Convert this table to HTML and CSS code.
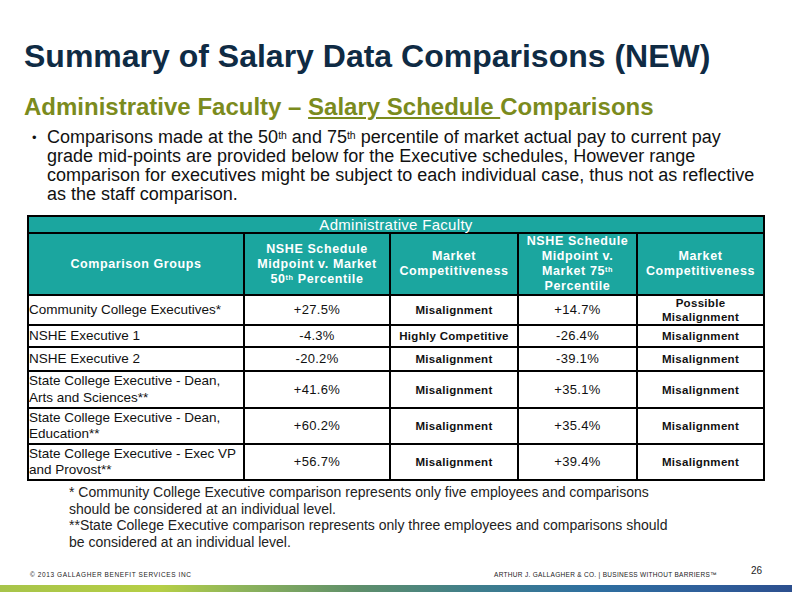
FILE: index.html
```html
<!DOCTYPE html>
<html>
<head>
<meta charset="utf-8">
<link rel="stylesheet" href="styles.css">
</head>
<body>
<div class="slide">
  <h1 class="title">Summary of Salary Data Comparisons (NEW)</h1>
  <h2 class="subtitle">Administrative Faculty – <span class="ul">Salary Schedule </span>Comparisons</h2>
  <ul class="bullets">
    <li>Comparisons made at the 50<sup>th</sup> and 75<sup>th</sup> percentile of market actual pay to current pay grade mid-points are provided below for the Executive schedules, However range comparison for executives might be subject to each individual case, thus not as reflective as the staff comparison.</li>
  </ul>
  <table class="data">
    <colgroup>
      <col class="c1"><col class="c2"><col class="c3"><col class="c4"><col class="c5">
    </colgroup>
    <tr class="r-cap"><th colspan="5" class="cap">Administrative Faculty</th></tr>
    <tr class="r-head">
      <th>Comparison Groups</th>
      <th>NSHE Schedule<br>Midpoint v. Market<br>50<sup>th</sup> Percentile</th>
      <th>Market<br>Competitiveness</th>
      <th>NSHE Schedule<br>Midpoint v.<br>Market 75<sup>th</sup><br>Percentile</th>
      <th>Market<br>Competitiveness</th>
    </tr>
    <tr class="r1">
      <td class="grp">Community College Executives*</td><td>+27.5%</td><td class="mis">Misalignment</td><td>+14.7%</td><td class="pos">Possible<br>Misalignment</td>
    </tr>
    <tr class="r2">
      <td class="grp">NSHE Executive 1</td><td>-4.3%</td><td class="hc">Highly Competitive</td><td>-26.4%</td><td class="mis">Misalignment</td>
    </tr>
    <tr class="r3">
      <td class="grp">NSHE Executive 2</td><td>-20.2%</td><td class="mis">Misalignment</td><td>-39.1%</td><td class="mis">Misalignment</td>
    </tr>
    <tr class="r4">
      <td class="grp">State College Executive - Dean,<br>Arts and Sciences**</td><td>+41.6%</td><td class="mis">Misalignment</td><td>+35.1%</td><td class="mis">Misalignment</td>
    </tr>
    <tr class="r5">
      <td class="grp">State College Executive - Dean,<br>Education**</td><td>+60.2%</td><td class="mis">Misalignment</td><td>+35.4%</td><td class="mis">Misalignment</td>
    </tr>
    <tr class="r6">
      <td class="grp">State College Executive - Exec VP<br>and Provost**</td><td>+56.7%</td><td class="mis">Misalignment</td><td>+39.4%</td><td class="mis">Misalignment</td>
    </tr>
  </table>
  <div class="notes">
    <p>* Community College Executive comparison represents only five employees and comparisons should be considered at an individual level.</p>
    <p>**State College Executive comparison represents only three employees and comparisons should be considered at an individual level.</p>
  </div>
  <div class="bottom">
    <div class="footer">
      <span class="copy">© 2013 GALLAGHER BENEFIT SERVICES INC</span>
      <span class="brand">ARTHUR J. GALLAGHER &amp; CO. | BUSINESS WITHOUT BARRIERS™</span>
      <span class="page">26</span>
    </div>
    <div class="band"></div>
  </div>
</div>
</body>
</html>
```

FILE: styles.css
```css
html, body {
  margin: 0;
  padding: 0;
  background: #ffffff;
}
.slide {
  width: 792px;
  height: 612px;
  overflow: hidden;
  font-family: "Liberation Sans", Arial, sans-serif;
  display: flex;
  flex-direction: column;
}
.title {
  margin: 37px 0 0 24px;
  font-size: 32px;
  line-height: 38px;
  font-weight: bold;
  color: #0f2b44;
  letter-spacing: 0;
  white-space: nowrap;
}
.subtitle {
  margin: 18px 0 0 24px;
  font-size: 24px;
  line-height: 28px;
  font-weight: bold;
  color: #7b8b1d;
  letter-spacing: 0;
  white-space: nowrap;
}
.ul {
  text-decoration: underline;
  text-decoration-thickness: 2px;
  text-underline-offset: 2px;
}
.bullets {
  margin: 7px 0 0 0;
  padding: 0 0 0 47px;
  list-style: none;
}
.bullets li {
  position: relative;
  font-size: 18px;
  line-height: 19px;
  color: #111;
  width: 712px;
}
.bullets li::before {
  content: "•";
  position: absolute;
  left: -15px;
  top: 0;
  font-size: 13px;
}
sup {
  font-size: 0.58em;
  line-height: 0;
  vertical-align: 0.42em;
}
.data {
  margin: 11px 0 0 27px;
  border-collapse: collapse;
  table-layout: fixed;
  width: 736px;
  border: 2px solid #000;
}
.c1 { width: 216px; }
.c2 { width: 146px; }
.c3 { width: 128px; }
.c4 { width: 119px; }
.c5 { width: 127px; }
.data th, .data td {
  border: 2px solid #000;
  padding: 0;
  text-align: center;
  vertical-align: middle;
}
.data th {
  background: #1ba69f;
  color: #ffffff;
  font-weight: bold;
  font-size: 12.5px;
  line-height: 15px;
  letter-spacing: 0.6px;
}
.data th.cap {
  font-weight: normal;
  font-size: 15px;
  line-height: 15px;
  letter-spacing: 0.3px;
}
.r-cap { height: 17px; }
.r-head { height: 62px; }
.r1 { height: 29px; }
.r2 { height: 22px; }
.r3 { height: 24px; }
.r4 { height: 37px; }
.r5 { height: 36px; }
.r6 { height: 36px; }
.data td {
  font-size: 13px;
  line-height: 16px;
  color: #111;
  letter-spacing: 0.3px;
}
.data td.grp {
  text-align: left;
  font-size: 13.5px;
  line-height: 16.5px;
  letter-spacing: 0;
}
.data td.mis, .data td.hc, .data td.pos {
  font-weight: bold;
  font-size: 11.5px;
  line-height: 14px;
}
.mis { color: #cc1616; }
.hc { color: #226b1a; }
.pos { color: #c9a23a; }
.notes {
  margin: 3px 0 0 69px;
  width: 603px;
  font-size: 14px;
  line-height: 16.5px;
  color: #222;
}
.notes p { margin: 0; }
.bottom {
  margin-top: auto;
  margin-bottom: 20px;
}
.footer {
  display: flex;
  align-items: flex-start;
  padding: 0 0 0 30px;
  height: 22px;
  font-size: 6.5px;
  letter-spacing: 0.6px;
  color: #222;
}
.copy { padding-top: 8px; }
.brand { margin-left: auto; padding-top: 8px; letter-spacing: 0.3px; }
.page {
  font-size: 10px;
  letter-spacing: 0;
  margin: 0 30px 0 34px;
  padding-top: 2px;
}
.band {
  height: 7px;
  background: linear-gradient(90deg, #a7c44a 0%, #b6cf45 20%, #8fb55a 30%, #5f8f6a 45%, #3f7e8c 60%, #2e6fa0 75%, #2f5e9a 90%, #2c4f8e 100%);
}
```
